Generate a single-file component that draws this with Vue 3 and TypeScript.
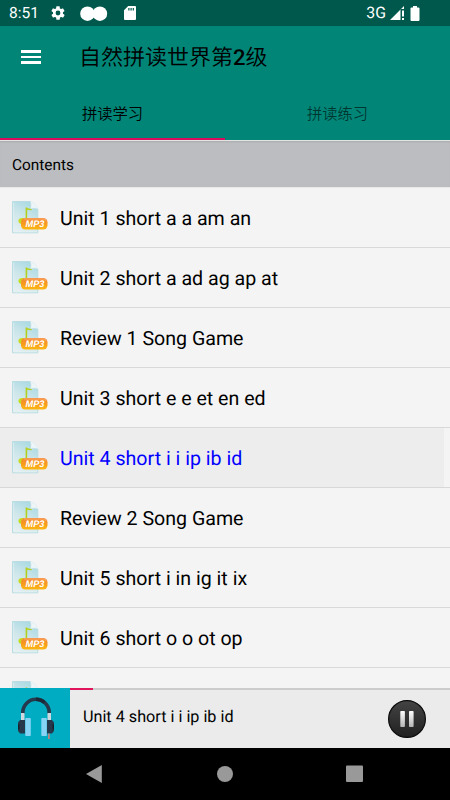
<script setup lang="ts">
import { ref } from 'vue'

interface Track {
  title: string
}

const tabs: string[] = ['拼读学习', '拼读练习']
const activeTab = ref(0)
const tracks: Track[] = [
  { title: 'Unit 1 short a a am an' },
  { title: 'Unit 2 short a ad ag ap at' },
  { title: 'Review 1 Song Game' },
  { title: 'Unit 3 short e e et en ed' },
  { title: 'Unit 4 short i i ip ib id' },
  { title: 'Review 2 Song Game' },
  { title: 'Unit 5 short i in ig it ix' },
  { title: 'Unit 6 short o o ot op' },
  { title: '' },
]
const current = ref(4)
const progress = ref(6.05)
</script>

<template>
  <div class="screen">
    <header class="status">
      <span class="clock">8:51</span>
      <svg class="gear" width="16" height="16" viewBox="0 0 24 24"><path fill="#fff" fill-rule="evenodd" d="M19.4 13c.04-.3.06-.6.06-1s-.02-.7-.06-1l2.1-1.6c.2-.2.25-.4.12-.65l-2-3.45c-.12-.2-.37-.3-.6-.2l-2.5 1a7.300 7.300 0 0 0-1.700-1L14.500 2.420A.5.5 0 0 0 14 2h-4a.5.5 0 0 0-.5.420L9.100 5.100c-.6.250-1.150.6-1.700 1l-2.500-1c-.2-.1-.470 0-.6.200l-2 3.450c-.12.220-.07.480.120.650L4.600 11c-.05.300-.07.650-.07 1s.02.700.07 1l-2.100 1.600c-.2.200-.25.420-.12.650l2 3.450c.120.220.370.300.6.200l2.500-1c.5.400 1.070.750 1.700 1l.4 2.680c.05.240.25.420.5.420h4c.250 0 .450-.180.500-.420l.4-2.680c.6-.250 1.150-.6 1.700-1l2.500 1c.230.100.480 0 .6-.200l2-3.450c.120-.22.07-.47-.12-.65zM12 15.600a3.600 3.600 0 1 1 0-7.200 3.600 3.600 0 0 1 0 7.200z"/></svg>
      <svg class="dots" width="28" height="16" viewBox="0 0 28 16"><circle cx="7.500" cy="7.700" r="7.300" fill="#fff"/><circle cx="19.900" cy="7.700" r="7.300" fill="#fff"/></svg>
      <svg class="card" width="12" height="14" viewBox="0 0 12 14"><path fill="#fff" fill-rule="evenodd" d="M4.200 0H11q1 0 1 1v12q0 1-1 1H1q-1 0-1-1V4.200zM4.300 2v2.600h1.200V2zM6.500 2v2.600h1.200V2zM8.700 2v2.600h1.200V2z"/></svg>
      <span class="network">3G</span>
      <svg class="signal" width="15" height="15" viewBox="0 0 15 15"><path fill="#fff" d="M0 14 14 0v3h-3.500v11zM12 4.500h2v6h-2zM12 12h2v2h-2z"/></svg>
      <svg class="battery" width="10" height="15" viewBox="0 0 10 15"><path fill="#fff" d="M3 0h4v1.500h1.500q1 0 1 1V14q0 1-1 1h-7q-1 0-1-1V2.500q0-1 1-1H3z"/></svg>
    </header>

    <div class="toolbar">
      <button class="menu" aria-label="Menu"><i></i><i></i><i></i></button>
      <h1>自然拼读世界第<b>2</b>级</h1>
    </div>

    <nav class="tabs">
      <button
        v-for="(tab, i) in tabs"
        :key="tab"
        class="tab"
        :class="{ active: activeTab === i }"
        @click="activeTab = i"
      >{{ tab }}</button>
    </nav>

    <div class="section">Contents</div>

    <ul class="list">
      <li
        v-for="(track, i) in tracks"
        :key="i"
        class="row"
        :class="{ playing: current === i }"
        @click="current = i"
      >
        <svg class="file" width="37" height="34" viewBox="0 0 37 34">
          <defs>
            <linearGradient id="paper" x1="0.75" y1="0" x2="0.3" y2="1">
              <stop offset="0" stop-color="#a6d8e2"/><stop offset="0.5" stop-color="#cde6ea"/><stop offset="1" stop-color="#e5eff1"/>
            </linearGradient>
            <linearGradient id="badge" x1="0" y1="0" x2="0" y2="1">
              <stop offset="0" stop-color="#f4883a"/><stop offset="0.5" stop-color="#f79a1c"/><stop offset="1" stop-color="#fdb913"/>
            </linearGradient>
          </defs>
          <path d="M.5.500H18.500L25.800 8V31.800H.5z" fill="url(#paper)" stroke="#b8dce2" stroke-width="1"/>
          <path d="M1.500 1.500V30.800H25" fill="none" stroke="#e4f2f4" stroke-width=".6"/>
          <path d="M18.500.200Q19.600 4 18.800 7.500 22.500 6.500 26 7.800 24 2 18.500.200z" fill="#edf5f6" stroke="#d8e9ec" stroke-width=".5"/>
          <path d="M13.600 21V6.500h1.300q.8 1.300 4.800 1.500v1.300q-3.200-.2-4.500-.6V21z" fill="#b5d01c"/>
          <ellipse cx="10.600" cy="20" rx="4.200" ry="3" fill="#c4dc1c"/>
          <rect x="9" y="17" width="26.500" height="11.500" rx="4.200" fill="url(#badge)"/>
          <path d="M12 18h20q2 0 2 2" fill="none" stroke="#ffb780" stroke-width=".7"/>
          <text v-if="track.title" class="badge-text" x="23" y="26.300" text-anchor="middle" textLength="19" lengthAdjust="spacingAndGlyphs">MP3</text>
        </svg>
        <span>{{ track.title }}</span>
      </li>
    </ul>

    <footer class="player">
      <div class="cover">
        <svg width="38" height="44" viewBox="0 0 38 44">
          <path d="M5.800 17V15.500a13.200 13.200 0 0 1 26.400 0V17" fill="none" stroke="#26384c" stroke-width="3.600"/>
          <path d="M19 2.300a13.200 13.200 0 0 1 8.500 3.200" fill="none" stroke="#1b2938" stroke-width="3.600"/>
          <path d="M4 16h3.500v8H4zM30.500 16H34v8h-3.500z" fill="#cfd8df"/>
          <path d="M8 23H3L1 25.500V34l2 2.500h5zM30 23h5l2 2.500V34l-2 2.500h-5z" fill="#26384c"/>
          <path d="M1 27.500h1.500v5H1zM35.500 27.500H37v5h-1.500z" fill="#17212d"/>
          <rect x="8.300" y="21" width="5.500" height="18" rx=".8" fill="#87d3f5"/>
          <rect x="24.300" y="21" width="5.500" height="18" rx=".8" fill="#87d3f5"/>
          <rect x="31" y="36.500" width="1.800" height="5.500" fill="#b98380"/>
        </svg>
      </div>
      <div class="now">
        <div class="track"><div class="played" :style="{ width: progress + '%' }"></div></div>
        <span class="title">{{ tracks[current].title }}</span>
        <button class="pause" aria-label="Pause">
          <svg width="40" height="40" viewBox="0 0 40 40">
            <defs>
              <linearGradient id="disc" x1="0" y1="0" x2="0" y2="1"><stop offset="0" stop-color="#444"/><stop offset="1" stop-color="#202020"/></linearGradient>
              <linearGradient id="bar" x1="0" y1="0" x2="0" y2="1"><stop offset="0" stop-color="#fff"/><stop offset="1" stop-color="#b4b4b4"/></linearGradient>
            </defs>
            <circle cx="20" cy="20" r="18.400" fill="url(#disc)" stroke="#0b0b0b" stroke-width="1.200"/>
            <rect x="13.300" y="12" width="4.600" height="16" rx=".8" fill="url(#bar)"/>
            <rect x="22" y="12" width="4.600" height="16" rx=".8" fill="url(#bar)"/>
          </svg>
        </button>
      </div>
    </footer>

    <div class="system">
      <svg width="450" height="52" viewBox="0 0 450 52">
        <path d="M86 26 101.800 17V35z" fill="#999"/>
        <circle cx="225" cy="26" r="8" fill="#999"/>
        <rect x="346" y="17.500" width="17" height="16.500" rx="1" fill="#999"/>
      </svg>
    </div>
  </div>
</template>

<style>
body {
  margin: 0;
  overflow: hidden;
}
</style>

<style scoped>
.screen {
  width: 450px;
  height: 800px;
  display: flex;
  flex-direction: column;
  overflow: hidden;
  background: #f4f4f4;
  font-family: Roboto, "Noto Sans CJK SC", sans-serif;
  color: #000;
  text-rendering: geometricPrecision;
}
button {
  border: 0;
  padding: 0;
  background: none;
  font: inherit;
  color: inherit;
}
.status {
  flex: none;
  height: 26px;
  box-sizing: border-box;
  padding: 0 30px 0 9px;
  display: flex;
  align-items: center;
  background: #00574b;
  color: #fff;
}
.clock {
  width: 41px;
  font-size: 15.500px;
  line-height: 29px;
  padding-top: 1px;
}
.gear {
  margin-right: 14px;
}
.dots {
  margin: 1px 16px 0 0;
}
.network {
  margin-left: auto;
  margin-right: 4px;
  font-size: 15.800px;
  line-height: 28px;
}
.signal {
  margin-right: 5px;
}
.toolbar {
  flex: none;
  height: 62px;
  display: flex;
  align-items: center;
  background: #008577;
}
.menu {
  width: 20px;
  margin: 0 38px 0 21px;
  display: grid;
  gap: 3px;
}
.menu i {
  height: 2.500px;
  background: #fff;
}
h1 {
  margin: 0;
  padding-top: 4px;
  font-size: 22px;
  font-weight: 350;
  line-height: 58px;
}
h1 b {
  font-weight: 500;
}
.tabs {
  flex: none;
  height: 52px;
  display: grid;
  grid-template-columns: 1fr 1fr;
  background: #008577;
}
.tab {
  font-size: 15.300px;
  font-weight: 350;
  line-height: 48px;
  padding-top: 2px;
  border-bottom: 2px solid transparent;
  color: rgba(0, 0, 0, 0.6);
}
.tab.active {
  color: #000;
  border-bottom-color: #d80b5c;
}
.section {
  flex: none;
  height: 48px;
  box-sizing: border-box;
  padding-left: 12px;
  border-top: 1px solid #e4e4e4;
  border-bottom: 1px solid #e8e8e8;
  background: #bcbdc1;
  box-shadow: inset 0 2px 2px -1px #aaa;
  font-size: 15.400px;
  line-height: 48px;
}
.list {
  flex: 1;
  min-height: 0;
  margin: 0;
  padding: 0;
  list-style: none;
  overflow: hidden;
}
.row {
  height: 60px;
  box-sizing: border-box;
  padding: 1px 0 0 12px;
  display: flex;
  align-items: center;
  gap: 11px;
  border-bottom: 1px solid #d8d8d8;
  font-size: 19.600px;
}
.row.playing {
  color: #00f;
  background: linear-gradient(to right, #ededed 444px, #f4f4f4 444px);
}
.file {
  flex: none;
}
.badge-text {
  font: italic 700 9.500px "Liberation Sans", sans-serif;
  fill: #fff;
}
.player {
  flex: none;
  height: 60px;
  display: flex;
  background: #ebebeb;
}
.cover {
  width: 70px;
  display: flex;
  align-items: center;
  justify-content: center;
  padding: 2px 0 0 2px;
  box-sizing: border-box;
  background: #00acc1;
}
.now {
  flex: 1;
  display: grid;
  grid-template: 2px 58px / 1fr 44px;
  align-items: center;
  padding-right: 21px;
}
.track {
  grid-column: 1 / 3;
  height: 2px;
  margin-right: -21px;
  background: #ccc;
}
.played {
  height: 2px;
  background: #e0155c;
}
.title {
  padding: 0 0 5px 13px;
  font-size: 16.200px;
}
.pause {
  height: 40px;
}
.system {
  flex: none;
  height: 52px;
  background: #000;
}
</style>
